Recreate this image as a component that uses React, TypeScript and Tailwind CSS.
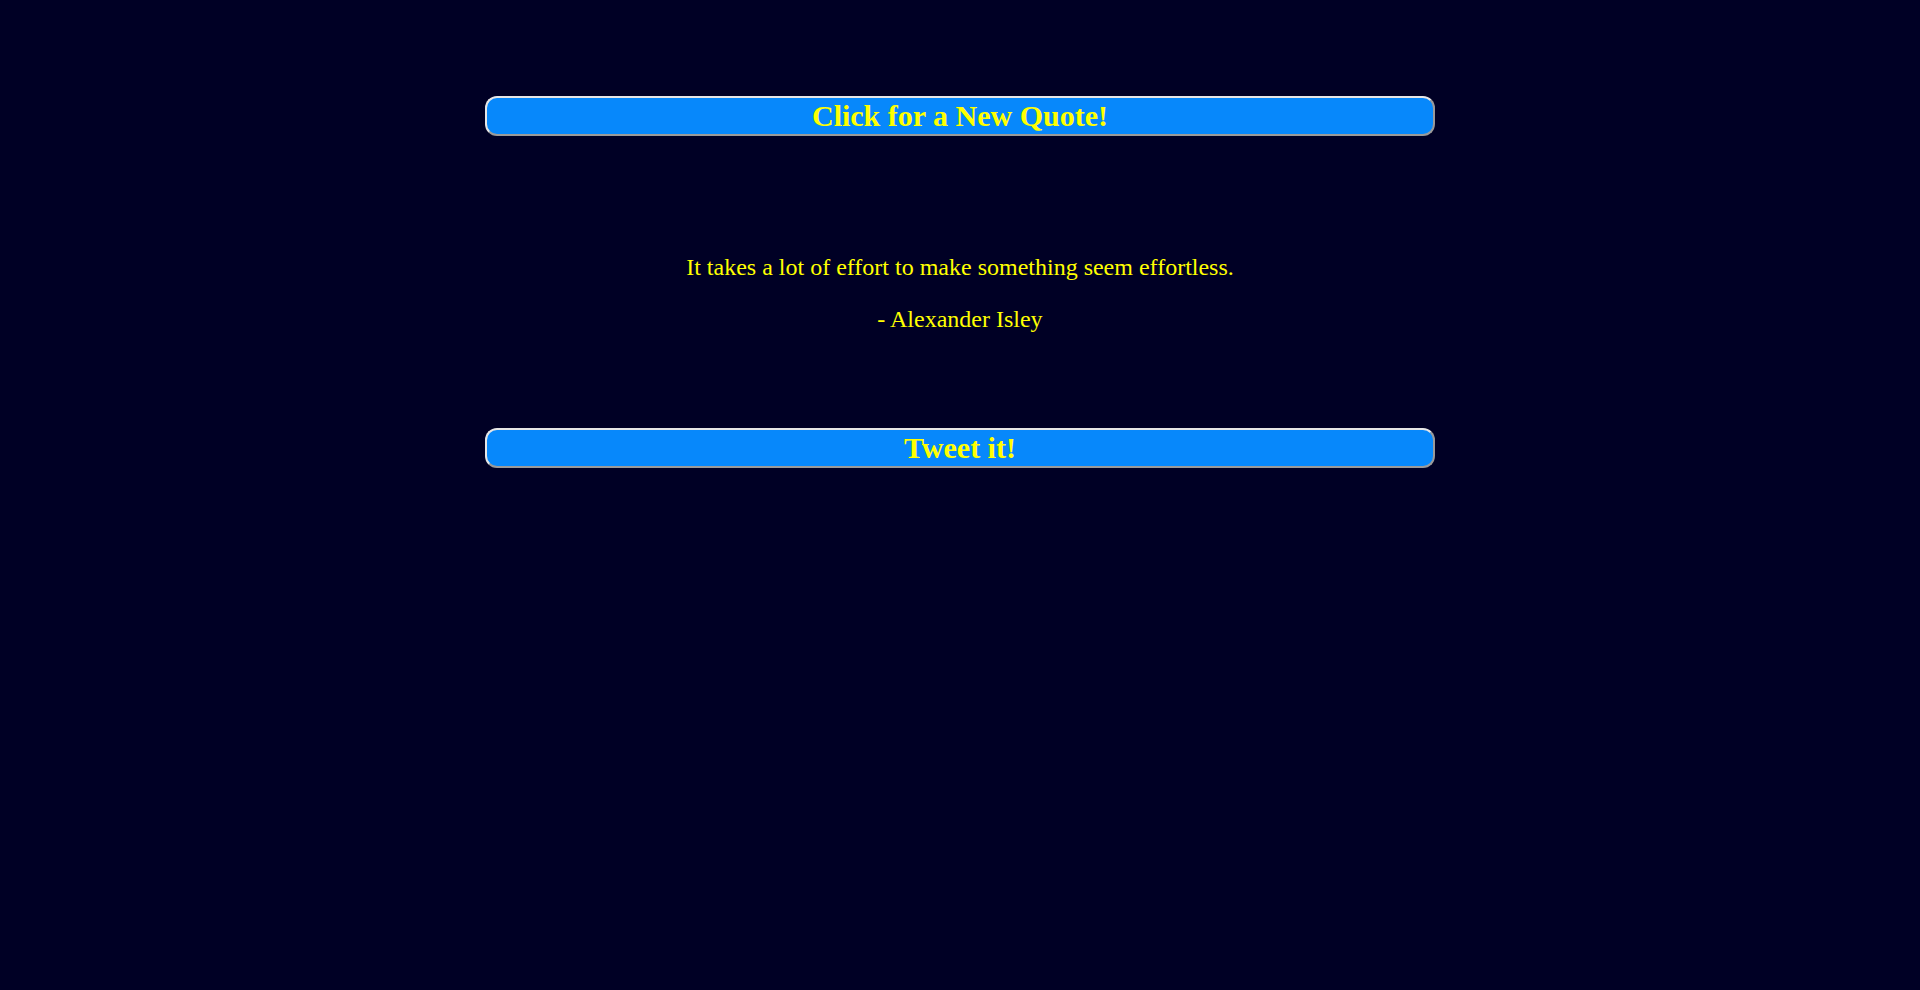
export default function App() {
  return (
    <div className="min-h-[990px] w-full bg-[#000025] pt-[96px] font-['Liberation_Serif',serif] text-[#ffff00]">
      <div className="mx-auto flex w-[950px] flex-col items-center">
        <button className="h-[40px] w-full cursor-pointer rounded-[12px] border-2 border-t-[#e6e6e6] border-l-[#e6e6e6] border-r-[#9a9a9a] border-b-[#9a9a9a] bg-[#0788fb] text-[30px] font-bold leading-none text-[#ffff00]">
          Click for a New Quote!
        </button>
        <div className="mt-[113px] flex flex-col items-center text-[24px]">
          <p>It takes a lot of effort to make something seem effortless.</p>
          <p className="mt-[16px]">- Alexander Isley</p>
        </div>
        <button className="mt-[91px] h-[40px] w-full cursor-pointer rounded-[12px] border-2 border-t-[#e6e6e6] border-l-[#e6e6e6] border-r-[#9a9a9a] border-b-[#9a9a9a] bg-[#0788fb] text-[30px] font-bold leading-none text-[#ffff00]">
          Tweet it!
        </button>
      </div>
    </div>
  );
}
